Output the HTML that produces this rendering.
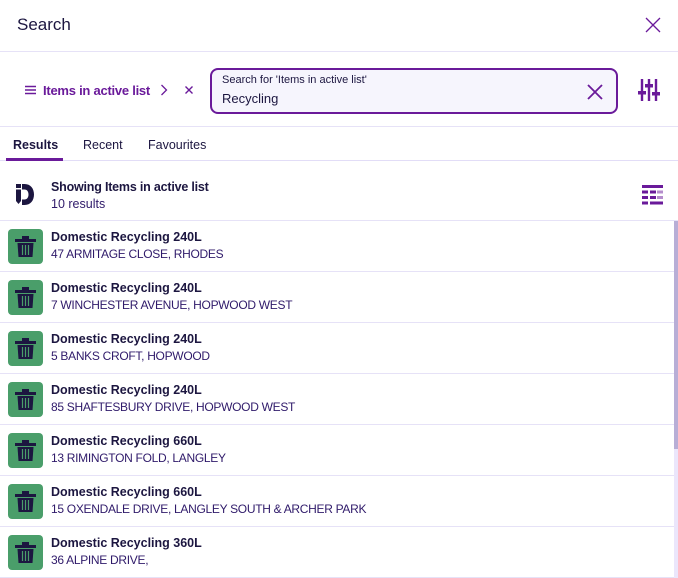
<!DOCTYPE html>
<html><head><meta charset="utf-8"><style>
*{margin:0;padding:0;box-sizing:border-box}
body{width:678px;height:578px;overflow:hidden;background:#fff;font-family:"Liberation Sans",sans-serif;color:#1c1640;position:relative}
.hdr{position:absolute;left:0;top:0;width:678px;height:52px;border-bottom:1px solid #e6e2f7}
.hdr .t{position:absolute;left:17px;top:15px;font-size:17px;color:#1c1640}
.bar{position:absolute;left:0;top:52px;width:678px;height:75px;border-bottom:1px solid #e6e2f7}
.crumb{position:absolute;left:43px;top:83px;font-size:13px;font-weight:bold;color:#6a1a9a;letter-spacing:-0.25px}
.inp{position:absolute;left:210px;top:68px;width:408px;height:46px;border:2.5px solid #6a1a9a;border-radius:8px;background:#f6f5fd}
.inp .l{position:absolute;left:10px;top:4px;font-size:11px;color:#1c1640}
.inp .v{position:absolute;left:10px;top:21px;font-size:13px;color:#1c1640}
.tabs{position:absolute;left:0;top:128px;width:678px;height:33px;border-bottom:1.5px solid #e2ddf7}
.tab{position:absolute;top:10px;font-size:12.5px;color:#1c1640}
.ind{position:absolute;left:6px;top:158px;width:57px;height:2.5px;background:#6a1a9a}
.sum{position:absolute;left:0;top:161px;width:678px;height:60px;border-bottom:1px solid #e6e2f7}
.row{position:absolute;left:0;width:674px;height:51px;border-bottom:1px solid #e6e2f7}
.ic{position:absolute;left:8px;top:8px;width:35px;height:35px;background:#4a9e6a;border-radius:4px}
.ic svg{position:absolute;left:7px;top:7px}
.r1{position:absolute;left:51px;top:9px;font-size:12.5px;font-weight:bold;color:#1c1640}
.r2{position:absolute;left:51px;top:26px;font-size:12px;letter-spacing:-0.3px;color:#2f1a6a}
.sb{position:absolute;left:674px;top:221px;width:4px;height:357px;background:#ebe6fb}
.th{position:absolute;left:674px;top:221px;width:4px;height:228px;background:#b8aed6}
</style></head><body>
<div class="hdr"><div class="t">Search</div>
<svg style="position:absolute;left:645px;top:17px" width="16" height="16" viewBox="0 0 16 16"><path d="M1 1L15 15M15 1L1 15" stroke="#6a1a9a" stroke-width="1.3"/></svg></div>
<div class="bar"></div>
<svg style="position:absolute;left:25px;top:85px" width="12" height="10"><path d="M0 1.5H11M0 5H11M0 8.5H11" stroke="#6a1a9a" stroke-width="1.4"/></svg>
<div class="crumb">Items in active list</div>
<svg style="position:absolute;left:160px;top:84px" width="8" height="12"><path d="M1.5 1L6.5 6L1.5 11" fill="none" stroke="#6a1a9a" stroke-width="1.3"/></svg>
<svg style="position:absolute;left:185px;top:86px" width="8" height="8"><path d="M0.5 0.5L7.5 7.5M7.5 0.5L0.5 7.5" stroke="#6a1a9a" stroke-width="1.4"/></svg>
<div class="inp"><div class="l">Search for 'Items in active list'</div><div class="v">Recycling</div>
<svg style="position:absolute;left:375px;top:14px" width="16" height="16"><path d="M1 1L15 15M15 1L1 15" stroke="#6a1a9a" stroke-width="1.8"/></svg></div>
<svg style="position:absolute;left:638px;top:79px" width="22" height="22" viewBox="0 0 22 22"><g stroke="#6a1a9a" stroke-width="2.4"><path d="M4 0V22M11 0V22M18 0V22"/></g><g fill="#6a1a9a"><rect x="0" y="12" width="8" height="3.5"/><rect x="7" y="5" width="8" height="3.5"/><rect x="14" y="13" width="8" height="3.5"/></g></svg>
<div class="tabs"><div class="tab" style="left:13px;font-weight:bold">Results</div><div class="tab" style="left:83px">Recent</div><div class="tab" style="left:148px">Favourites</div></div>
<div class="ind"></div>
<div class="sum">
<svg style="position:absolute;left:16px;top:23px" width="18" height="22" viewBox="0 0 18 22"><rect x="0" y="0" width="5" height="4" fill="#1c1640"/><path d="M0 5.5H5V17L2.5 20L0 17Z" fill="#1c1640"/><path d="M6 0H8.5C14.5 0 18 4.5 18 10.5C18 16.5 14.5 21 8.5 21H6V15.5H8.5C11 15.5 12.5 13.5 12.5 10.5C12.5 7.5 11 5.5 8.5 5.5H6Z" fill="#1c1640"/></svg>
<div style="position:absolute;left:51px;top:19px;font-size:12.5px;font-weight:bold;letter-spacing:-0.2px">Showing Items in active list</div>
<div style="position:absolute;left:51px;top:36px;font-size:12.5px;color:#2f1a6a">10 results</div>
<svg style="position:absolute;left:642px;top:24px" width="21" height="20"><g fill="#6a1a9a"><rect x="0" y="0" width="21" height="3"/><rect x="0" y="5.5" width="6" height="3"/><rect x="8" y="5.5" width="6" height="3"/><rect x="15" y="5.5" width="6" height="3" opacity=".5"/><rect x="0" y="11" width="6" height="3"/><rect x="8" y="11" width="6" height="3"/><rect x="15" y="11" width="6" height="3" opacity=".5"/><rect x="0" y="16.5" width="6" height="3"/><rect x="8" y="16.5" width="13" height="3"/></g></svg>
</div>
<div class="row" style="top:221px"><div class="ic"><svg width="21" height="21" viewBox="0 0 21 21"><rect x="7" y="0" width="7" height="3" fill="#1c1640"/><rect x="0" y="3" width="21" height="3" fill="#1c1640"/><path d="M2.5 7H18.5L17.5 21H3.5Z" fill="#1c1640"/><path d="M7.5 9V19M10.5 9V19M13.5 9V19" stroke="#4a9e6a" stroke-width="1.2"/></svg></div><div class="r1">Domestic Recycling 240L</div><div class="r2">47 ARMITAGE CLOSE, RHODES</div></div>
<div class="row" style="top:272px"><div class="ic"><svg width="21" height="21" viewBox="0 0 21 21"><rect x="7" y="0" width="7" height="3" fill="#1c1640"/><rect x="0" y="3" width="21" height="3" fill="#1c1640"/><path d="M2.5 7H18.5L17.5 21H3.5Z" fill="#1c1640"/><path d="M7.5 9V19M10.5 9V19M13.5 9V19" stroke="#4a9e6a" stroke-width="1.2"/></svg></div><div class="r1">Domestic Recycling 240L</div><div class="r2">7 WINCHESTER AVENUE, HOPWOOD WEST</div></div>
<div class="row" style="top:323px"><div class="ic"><svg width="21" height="21" viewBox="0 0 21 21"><rect x="7" y="0" width="7" height="3" fill="#1c1640"/><rect x="0" y="3" width="21" height="3" fill="#1c1640"/><path d="M2.5 7H18.5L17.5 21H3.5Z" fill="#1c1640"/><path d="M7.5 9V19M10.5 9V19M13.5 9V19" stroke="#4a9e6a" stroke-width="1.2"/></svg></div><div class="r1">Domestic Recycling 240L</div><div class="r2">5 BANKS CROFT, HOPWOOD</div></div>
<div class="row" style="top:374px"><div class="ic"><svg width="21" height="21" viewBox="0 0 21 21"><rect x="7" y="0" width="7" height="3" fill="#1c1640"/><rect x="0" y="3" width="21" height="3" fill="#1c1640"/><path d="M2.5 7H18.5L17.5 21H3.5Z" fill="#1c1640"/><path d="M7.5 9V19M10.5 9V19M13.5 9V19" stroke="#4a9e6a" stroke-width="1.2"/></svg></div><div class="r1">Domestic Recycling 240L</div><div class="r2">85 SHAFTESBURY DRIVE, HOPWOOD WEST</div></div>
<div class="row" style="top:425px"><div class="ic"><svg width="21" height="21" viewBox="0 0 21 21"><rect x="7" y="0" width="7" height="3" fill="#1c1640"/><rect x="0" y="3" width="21" height="3" fill="#1c1640"/><path d="M2.5 7H18.5L17.5 21H3.5Z" fill="#1c1640"/><path d="M7.5 9V19M10.5 9V19M13.5 9V19" stroke="#4a9e6a" stroke-width="1.2"/></svg></div><div class="r1">Domestic Recycling 660L</div><div class="r2">13 RIMINGTON FOLD, LANGLEY</div></div>
<div class="row" style="top:476px"><div class="ic"><svg width="21" height="21" viewBox="0 0 21 21"><rect x="7" y="0" width="7" height="3" fill="#1c1640"/><rect x="0" y="3" width="21" height="3" fill="#1c1640"/><path d="M2.5 7H18.5L17.5 21H3.5Z" fill="#1c1640"/><path d="M7.5 9V19M10.5 9V19M13.5 9V19" stroke="#4a9e6a" stroke-width="1.2"/></svg></div><div class="r1">Domestic Recycling 660L</div><div class="r2">15 OXENDALE DRIVE, LANGLEY SOUTH &amp; ARCHER PARK</div></div>
<div class="row" style="top:527px"><div class="ic"><svg width="21" height="21" viewBox="0 0 21 21"><rect x="7" y="0" width="7" height="3" fill="#1c1640"/><rect x="0" y="3" width="21" height="3" fill="#1c1640"/><path d="M2.5 7H18.5L17.5 21H3.5Z" fill="#1c1640"/><path d="M7.5 9V19M10.5 9V19M13.5 9V19" stroke="#4a9e6a" stroke-width="1.2"/></svg></div><div class="r1">Domestic Recycling 360L</div><div class="r2">36 ALPINE DRIVE,</div></div>
<div class="sb"></div><div class="th"></div>
</body></html>
